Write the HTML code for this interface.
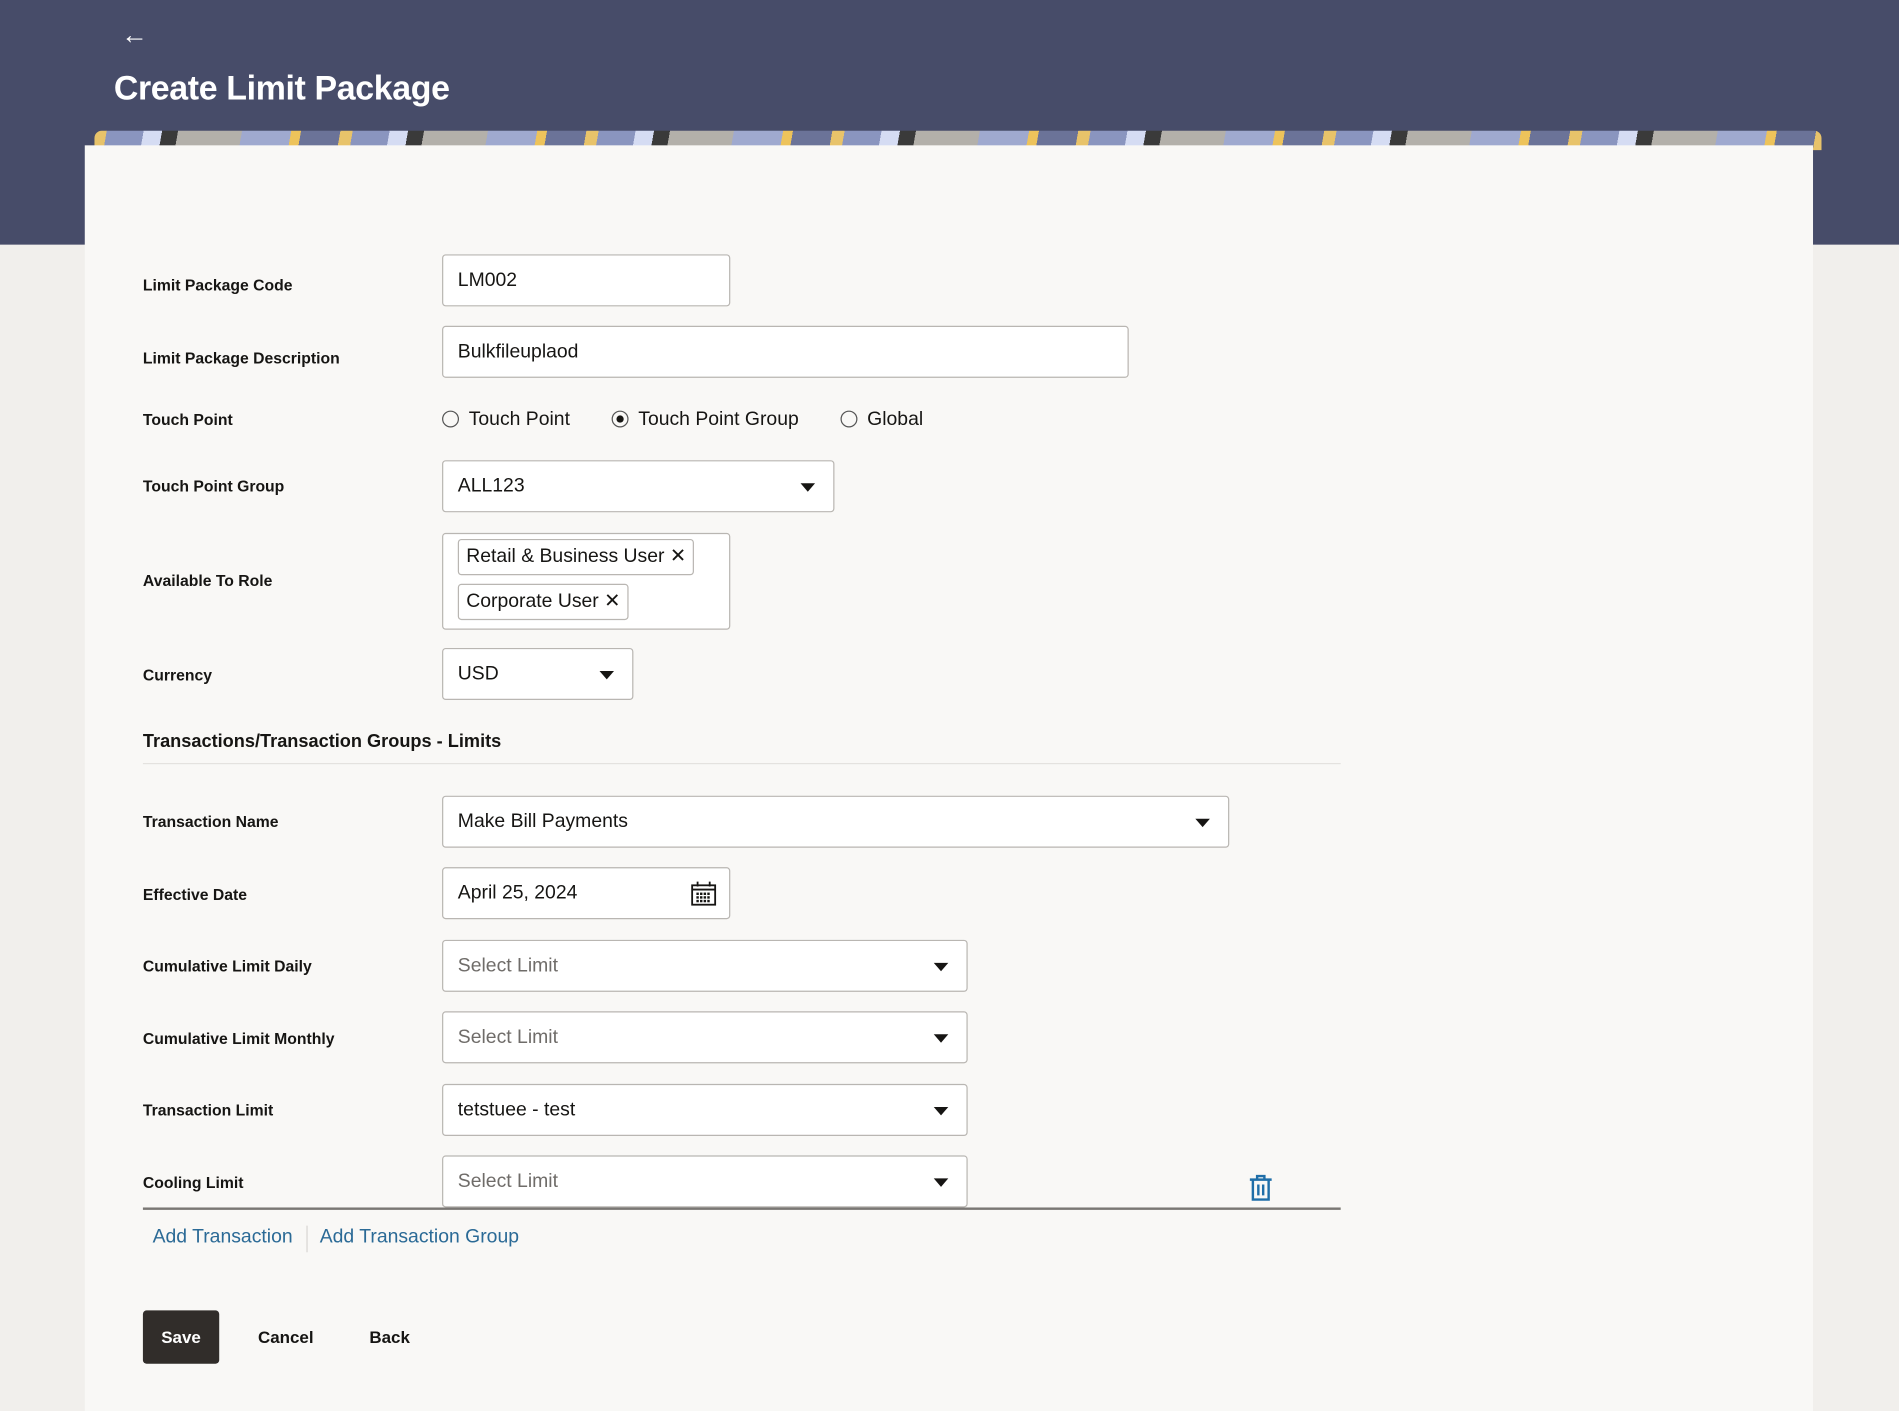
<!DOCTYPE html>
<html><head><meta charset="utf-8"><style>
html,body{margin:0;padding:0;width:1899px;height:1407px;overflow:hidden;background:#f1efec;}
#s{position:absolute;left:0;top:0;width:1568px;height:1162px;transform:scale(1.2111,1.2111);transform-origin:0 0;font-family:"Liberation Sans",sans-serif;color:#161513;}
.hdr{position:absolute;left:0;top:0;width:1568px;height:202px;background:#474c69;}
.banner{position:absolute;left:78px;top:108px;width:1426px;height:16px;border-radius:6px 6px 0 0;overflow:hidden;
background:repeating-linear-gradient(100deg,#e8c36a 0 10px,#8a95bf 10px 40px,#d5dcf3 40px 55px,#3a3a3a 55px 68px,#b3b0aa 68px 120px,#9fa9cf 120px 160px,#edc35b 160px 168px,#6b7398 168px 200px);}
.card{position:absolute;left:70px;top:120px;width:1427px;height:1045px;background:#f9f8f6;}
.lbl{position:absolute;left:118px;font-size:13px;font-weight:bold;}
.inp{position:absolute;left:365px;background:#fff;border:1px solid #b9b6b2;border-radius:3px;box-sizing:border-box;height:43px;font-size:16px;padding-left:12px;line-height:41px;}
.arr{position:absolute;right:15px;top:18px;width:0;height:0;border-left:6px solid transparent;border-right:6px solid transparent;border-top:7px solid #161513;}
.ph{color:#6f6c69}
.radio{position:absolute;top:338px;font-size:16px;}
.radio i{display:inline-block;width:14px;height:14px;border:1.5px solid #555;border-radius:50%;vertical-align:-2px;margin-right:8px;box-sizing:border-box;position:relative}
.radio i.on:after{content:"";position:absolute;left:2.5px;top:2.5px;width:6px;height:6px;border-radius:50%;background:#161513}
.chip{position:absolute;left:378px;height:30px;border:1px solid #b9b6b2;border-radius:3px;background:#fff;box-sizing:border-box;font-size:16px;line-height:28px;padding:0 6px;}
a{color:#2b6a96;text-decoration:none;font-size:16px;position:absolute;}
</style></head><body><div id="s">
<div class="hdr"></div>
<div style="position:absolute;left:100px;top:16px;color:#fff;font-size:22px;">&#8592;</div>
<div style="position:absolute;left:94px;top:57px;color:#fff;font-size:28px;font-weight:bold;letter-spacing:-0.3px;">Create Limit Package</div>
<div class="banner"></div>
<div class="card"></div>

<div class="lbl" style="top:228px">Limit Package Code</div>
<div class="inp" style="top:210px;width:238px;">LM002</div>
<div class="lbl" style="top:288px">Limit Package Description</div>
<div class="inp" style="top:269px;width:567px;">Bulkfileuplaod</div>
<div class="lbl" style="top:339px">Touch Point</div>
<div class="radio" style="left:365px"><i></i>Touch Point</div>
<div class="radio" style="left:505px"><i class="on"></i>Touch Point Group</div>
<div class="radio" style="left:694px"><i></i>Global</div>
<div class="lbl" style="top:394px">Touch Point Group</div>
<div class="inp" style="top:380px;width:324px;">ALL123<span class="arr"></span></div>
<div class="lbl" style="top:472px">Available To Role</div>
<div class="inp" style="top:440px;width:238px;height:80px;"></div>
<div class="chip" style="top:445px">Retail &amp; Business User &#x2715;</div>
<div class="chip" style="top:482px">Corporate User &#x2715;</div>
<div class="lbl" style="top:550px">Currency</div>
<div class="inp" style="top:535px;width:158px;">USD<span class="arr"></span></div>

<div style="position:absolute;left:118px;top:604px;font-size:15px;font-weight:bold;">Transactions/Transaction Groups - Limits</div>
<div style="position:absolute;left:118px;top:630px;width:989px;height:1px;background:#e4e2df"></div>

<div class="lbl" style="top:671px">Transaction Name</div>
<div class="inp" style="top:657px;width:650px;">Make Bill Payments<span class="arr"></span></div>
<div class="lbl" style="top:731px">Effective Date</div>
<div class="inp" style="top:716px;width:238px;">April 25, 2024
<svg style="position:absolute;right:10px;top:10px" width="22" height="22" viewBox="0 0 22 22"><rect x="1.5" y="4" width="19" height="16" fill="#fff" stroke="#161513" stroke-width="1.5"/><line x1="1.5" y1="7.5" x2="20.5" y2="7.5" stroke="#161513" stroke-width="1.5"/><line x1="6" y1="1" x2="6" y2="5" stroke="#161513" stroke-width="1.5"/><line x1="16" y1="1" x2="16" y2="5" stroke="#161513" stroke-width="1.5"/><g fill="#161513"><rect x="5" y="10" width="2" height="2"/><rect x="8" y="10" width="2" height="2"/><rect x="11" y="10" width="2" height="2"/><rect x="14" y="10" width="2" height="2"/><rect x="5" y="13" width="2" height="2"/><rect x="8" y="13" width="2" height="2"/><rect x="11" y="13" width="2" height="2"/><rect x="14" y="13" width="2" height="2"/><rect x="5" y="16" width="2" height="2"/><rect x="8" y="16" width="2" height="2"/><rect x="11" y="16" width="2" height="2"/><rect x="14" y="16" width="2" height="2"/></g></svg></div>
<div class="lbl" style="top:790px">Cumulative Limit Daily</div>
<div class="inp" style="top:776px;width:434px;"><span class="ph">Select Limit</span><span class="arr"></span></div>
<div class="lbl" style="top:850px">Cumulative Limit Monthly</div>
<div class="inp" style="top:835px;width:434px;"><span class="ph">Select Limit</span><span class="arr"></span></div>
<div class="lbl" style="top:909px">Transaction Limit</div>
<div class="inp" style="top:895px;width:434px;">tetstuee - test<span class="arr"></span></div>
<div class="lbl" style="top:969px">Cooling Limit</div>
<div class="inp" style="top:954px;width:434px;"><span class="ph">Select Limit</span><span class="arr"></span></div>
<svg style="position:absolute;left:1031px;top:970px" width="20" height="22" viewBox="0 0 20 22"><path d="M1 4H19M7 4V1H13V4M3.5 4V20.5H16.5V4M8 8V17M12 8V17" fill="none" stroke="#1f6ea8" stroke-width="2"/></svg>
<div style="position:absolute;left:118px;top:997px;width:989px;height:2px;background:#7a7774"></div>

<a style="left:126px;top:1013px">Add Transaction</a>
<div style="position:absolute;left:253px;top:1012px;width:1px;height:22px;background:#d8d6d3"></div>
<a style="left:264px;top:1013px">Add Transaction Group</a>

<div style="position:absolute;left:118px;top:1082px;width:63px;height:44px;background:#312d2a;border-radius:3px;color:#fff;font-weight:bold;font-size:14px;text-align:center;line-height:44px;">Save</div>
<div style="position:absolute;left:213px;top:1096px;font-size:14px;font-weight:bold;">Cancel</div>
<div style="position:absolute;left:305px;top:1096px;font-size:14px;font-weight:bold;">Back</div>
</div></body></html>
